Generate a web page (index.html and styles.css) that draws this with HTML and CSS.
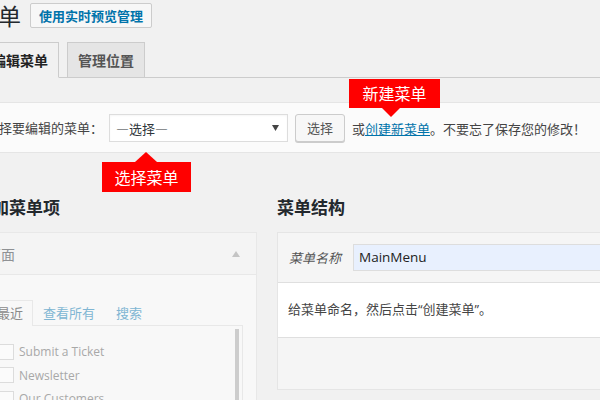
FILE: index.html
```html
<!DOCTYPE html>
<html lang="zh-CN">
<head>
<meta charset="utf-8">
<title>菜单</title>
<link rel="stylesheet" href="styles.css">
</head>
<body>
<div class="page">
  <div class="wrap">
    <div class="title-row">
      <h1 class="title">菜单</h1>
      <a class="title-btn">使用实时预览管理</a>
    </div>
    <div class="tab-bar">
      <span class="tab tab-active">编辑菜单</span>
      <span class="tab">管理位置</span>
    </div>
    <div class="manage">
      <span class="manage-label">选择要编辑的菜单：</span>
      <div class="select">
        <span class="select-text">—选择—</span>
        <svg class="select-arrow" width="7" height="6" viewBox="0 0 7 6"><polygon points="0,0 7,0 3.5,6" fill="#444"/></svg>
      </div>
      <span class="btn">选择</span>
      <span class="manage-note">或<a class="link">创建新菜单</a>。不要忘了保存您的修改！</span>
    </div>
    <div class="columns">
      <div class="col-left">
        <h3 class="col-title">添加菜单项</h3>
        <div class="box-left">
          <div class="box-left-head">
            <span>页面</span>
            <svg class="head-arrow" width="8" height="6" viewBox="0 0 8 6"><polygon points="0,6 8,6 4,0" fill="#c4c4c4"/></svg>
          </div>
          <div class="box-left-body">
            <div class="mini-tabs">
              <span class="mini-tab mini-tab-active">最近</span>
              <span class="mini-tab">查看所有</span>
              <span class="mini-tab">搜索</span>
            </div>
            <div class="tab-panel">
              <ul class="items">
                <li class="item"><span class="check"></span>Submit a Ticket</li>
                <li class="item"><span class="check"></span>Newsletter</li>
                <li class="item"><span class="check"></span>Our Customers</li>
              </ul>
              <div class="scrollbar"></div>
            </div>
          </div>
        </div>
      </div>
      <div class="col-right">
        <h3 class="col-title">菜单结构</h3>
        <div class="box-right">
          <div class="box-right-head">
            <span class="name-label">菜单名称</span>
            <div class="name-input">MainMenu</div>
          </div>
          <div class="box-right-body">给菜单命名，然后点击“创建菜单”。</div>
          <div class="box-right-foot"></div>
        </div>
      </div>
    </div>
  </div>

  <div class="callout callout-new">新建菜单<span class="callout-tip-down"></span></div>
  <div class="callout callout-select">选择菜单<span class="callout-tip-up"></span></div>
</div>
</body>
</html>
```

FILE: styles.css
```css
html, body {
  margin: 0;
  padding: 0;
}

body {
  background: #f1f1f1;
  color: #444;
  font-family: "Noto Sans CJK SC", "Open Sans", sans-serif;
  font-size: 13px;
  overflow: hidden;
  width: 600px;
  height: 400px;
}

.page {
  position: relative;
  width: 600px;
  height: 400px;
  overflow: hidden;
}

.wrap {
  margin-left: -25px;
  width: 700px;
}

/* title row */
.title-row {
  display: flex;
  align-items: center;
  margin-top: 3px;
  height: 25px;
}

.title {
  margin: 0 9px 0 0;
  font-size: 23px;
  font-weight: 400;
  line-height: 25px;
  color: #23282d;
}

.title-btn {
  display: inline-block;
  height: 23px;
  line-height: 23px;
  padding: 0 8px;
  border: 1px solid #ccc;
  border-radius: 2px;
  background: #f7f7f7;
  color: #0073aa;
  font-size: 13px;
  font-weight: 700;
}

/* tabs */
.tab-bar {
  display: flex;
  margin-top: 14px;
  border-bottom: 1px solid #ccc;
}

.tab {
  margin-left: 8px;
  margin-bottom: -1px;
  padding: 5px 10px;
  line-height: 24px;
  font-size: 14px;
  font-weight: 700;
  color: #555;
  background: #e5e5e5;
  border: 1px solid #ccc;
}

.tab:first-child {
  margin-left: 6px;
}

.tab-active {
  background: #f1f1f1;
  color: #222;
  border-bottom-color: #f1f1f1;
}

/* manage menus */
.manage {
  display: flex;
  align-items: center;
  margin-top: 24px;
  padding: 11px 10px 10px;
  background: #fbfbfb;
  border: 1px solid #e5e5e5;
}

.manage-label {
  margin-right: 6px;
  line-height: 28px;
}

.select {
  display: flex;
  align-items: center;
  justify-content: space-between;
  box-sizing: border-box;
  width: 179px;
  height: 28px;
  padding: 0 8px 0 6px;
  background: #fff;
  border: 1px solid #ddd;
  box-shadow: inset 0 1px 2px rgba(0, 0, 0, 0.04);
  color: #32373c;
}

.select-arrow {
  display: block;
}

.btn {
  box-sizing: border-box;
  height: 28px;
  line-height: 26px;
  margin-left: 7px;
  padding: 0 11px;
  background: #f7f7f7;
  border: 1px solid #ccc;
  border-radius: 3px;
  box-shadow: 0 1px 0 #ccc;
  color: #555;
}

.manage-note {
  margin-left: 7px;
  white-space: nowrap;
}

.link {
  color: #0073aa;
  text-decoration: underline;
}

/* columns */
.columns {
  display: flex;
  align-items: flex-start;
  margin-top: 42px;
}

.col-left {
  width: 282px;
  flex: none;
}

.col-right {
  flex: 1;
  margin-left: 20px;
  min-width: 0;
}

.col-title {
  margin: 0 0 13px;
  font-size: 17px;
  font-weight: 700;
  line-height: 24px;
  color: #23282d;
}

/* left box (disabled look) */
.box-left {
  border: 1px solid #e8e8e8;
  background: #f8f8f8;
  height: 300px;
}

.box-left-head {
  display: flex;
  align-items: center;
  justify-content: space-between;
  height: 41px;
  padding: 0 16px 0 11px;
  background: #f4f4f4;
  border-bottom: 1px solid #e8e8e8;
  font-size: 14px;
  color: #8f9194;
}

.head-arrow {
  display: block;
}

.box-left-body {
  padding: 25px 13px 0 11px;
}

.mini-tabs {
  display: flex;
  height: 26px;
}

.mini-tab {
  padding: 0 10px 0 9px;
  line-height: 24px;
  font-size: 13px;
  color: #80b6d3;
  border: 1px solid transparent;
  border-bottom: 0;
}

.mini-tab-active {
  padding: 0 9px;
  color: #8a8a8a;
  border-color: #e8e8e8;
  background: #f8f8f8;
  position: relative;
  height: 26px;
  box-sizing: border-box;
  z-index: 1;
}

.tab-panel {
  display: flex;
  margin-top: -1px;
  margin-left: 1px;
  border: 1px solid #e8e8e8;
  height: 120px;
}

.items {
  flex: 1;
  margin: 0;
  padding: 14px 10px 0 9px;
  list-style: none;
}

.item {
  display: flex;
  align-items: center;
  height: 23.5px;
  font-family: "Open Sans", "Noto Sans CJK SC", sans-serif;
  font-size: 12px;
  color: #a8a8a8;
}

.check {
  box-sizing: border-box;
  width: 16px;
  height: 16px;
  margin-right: 5px;
  border: 1px solid #dcdcdc;
  background: #fbfbfb;
  flex: none;
}

.scrollbar {
  width: 4px;
  margin: 3px 3px 0 0;
  background: #cdcdcd;
}

/* right box */
.box-right {
  border: 1px solid #e5e5e5;
  background: #f5f5f5;
}

.box-right-head {
  display: flex;
  align-items: center;
  padding: 11px 11px;
  background: #f5f5f5;
  border-bottom: 1px solid #dfdfdf;
}

.name-label {
  margin-right: 12px;
  font-style: italic;
  color: #555;
  font-size: 13px;
}

.name-input {
  flex: 1;
  box-sizing: border-box;
  height: 27px;
  line-height: 25px;
  padding: 0 5px;
  background: #e8f0fe;
  border: 1px solid #dddddd;
  font-family: "Open Sans", "Noto Sans CJK SC", sans-serif;
  font-size: 13.5px;
  color: #222;
}

.box-right-body {
  background: #fff;
  padding: 15px 10px 17px;
  line-height: 22px;
  border-bottom: 1px solid #dfdfdf;
  color: #444;
  font-family: "Open Sans", "Noto Sans CJK SC", sans-serif;
}

.box-right-foot {
  height: 51px;
  background: #f5f5f5;
}

/* callouts */
.callout {
  position: absolute;
  background: #ff0000;
  color: #fff;
  font-size: 16px;
  text-align: center;
}

.callout-new {
  left: 349px;
  top: 79px;
  width: 91px;
  height: 29px;
  line-height: 29px;
}

.callout-select {
  left: 102px;
  top: 162px;
  width: 89px;
  height: 30px;
  line-height: 30px;
}

.callout-tip-down {
  position: absolute;
  left: 33px;
  top: 29px;
  width: 0;
  height: 0;
  border-left: 9px solid transparent;
  border-right: 9px solid transparent;
  border-top: 9px solid #ff0000;
}

.callout-tip-up {
  position: absolute;
  left: 33px;
  top: -10px;
  width: 0;
  height: 0;
  border-left: 11px solid transparent;
  border-right: 11px solid transparent;
  border-bottom: 10px solid #ff0000;
}
```
